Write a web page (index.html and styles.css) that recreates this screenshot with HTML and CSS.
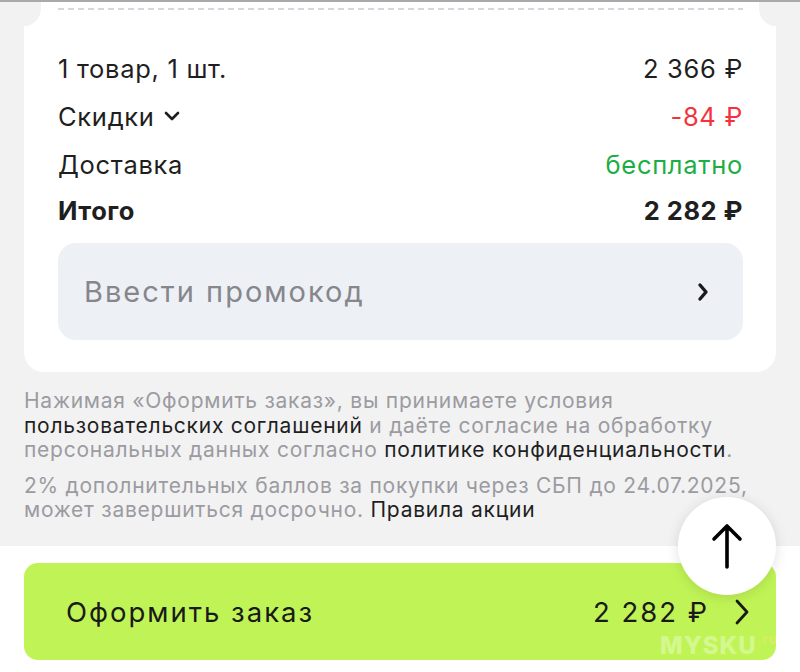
FILE: index.html
```html
<!DOCTYPE html>
<html lang="ru">
<head>
    <meta charset="UTF-8">
    <meta name="viewport" content="width=device-width, initial-scale=1.0">
    <title>Оформление заказа</title>
    <link rel="stylesheet" href="styles.css">
</head>
<body>
    <div class="page">
        <section class="card">
            <div class="notch notch-left"></div>
            <div class="notch notch-right"></div>
            <div class="dashes"></div>

            <div class="summary">
                <div class="row">
                    <span>1 товар, 1 шт.</span>
                    <span>2 366 ₽</span>
                </div>
                <div class="row">
                    <span class="discount">Скидки
                        <svg width="18" height="12" viewBox="0 0 18 12"><path d="M3 3 L9 9 L15 3" fill="none" stroke="#1f1f1f" stroke-width="2.6" stroke-linecap="round" stroke-linejoin="round"/></svg>
                    </span>
                    <span class="red">-84 ₽</span>
                </div>
                <div class="row">
                    <span>Доставка</span>
                    <span class="green">бесплатно</span>
                </div>
                <div class="row total">
                    <span>Итого</span>
                    <span>2 282 ₽</span>
                </div>
            </div>

            <div class="promo">
                <span>Ввести промокод</span>
                <svg width="16" height="22" viewBox="0 0 16 22"><path d="M5 4 L11 11 L5 18" fill="none" stroke="#1a1a1a" stroke-width="3.4" stroke-linecap="round" stroke-linejoin="round"/></svg>
            </div>
        </section>

        <div class="legal">
            <p>Нажимая «Оформить заказ», вы принимаете условия<br><a href="#">пользовательских соглашений</a> и даёте согласие на обработку<br>персональных данных согласно <a href="#">политике конфиденциальности</a>.</p>
            <p>2% дополнительных баллов за покупки через СБП до 24.07.2025,<br>может завершиться досрочно. <a href="#">Правила акции</a></p>
        </div>
    </div>

    <footer class="bottom-bar">
        <button class="checkout">
            <span>Оформить заказ</span>
            <span class="checkout-price">2 282 ₽
                <svg width="18" height="28" viewBox="0 0 18 28"><path d="M4 3 L14 14 L4 25" fill="none" stroke="#1a1a1a" stroke-width="2.8" stroke-linecap="round" stroke-linejoin="round"/></svg>
            </span>
        </button>
        <span class="watermark">MYSKU<small>.ru</small></span>
        <button class="to-top">
            <svg width="40" height="48" viewBox="0 0 40 48"><path d="M20 45 V4 M7 17 L20 4 L33 17" fill="none" stroke="#000" stroke-width="3.6" stroke-linecap="round" stroke-linejoin="round"/></svg>
        </button>
    </footer>
</body>
</html>
```

FILE: styles.css
```css
body {
    font-family: Inter, "Noto Sans", sans-serif;
    margin: 0;
    padding: 0;
    background-color: #f2f2f3;
    color: #1f1f1f;
    height: 672px;
    overflow: hidden;
    border-top: 2px solid #a9a9a9;
    box-sizing: border-box;
}
.page {
    padding: 0 24px;
}
.card {
    position: relative;
    background-color: white;
    border-radius: 0 0 20px 20px;
    padding: 6px 33px 32px 34px;
    overflow: hidden;
}
.notch {
    position: absolute;
    top: -22px;
    width: 34px;
    height: 46px;
    border-radius: 17px;
    background-color: #f2f2f3;
}
.notch-left {
    left: -17px;
}
.notch-right {
    right: -17px;
}
.dashes {
    height: 2px;
    background: repeating-linear-gradient(90deg, #d3d8de 0 6px, transparent 6px 10px);
}
.summary {
    margin-top: 34px;
    font-size: 25.5px;
    letter-spacing: 0.7px;
}
.row {
    display: flex;
    justify-content: space-between;
    align-items: center;
    height: 48px;
}
.row.total {
    height: 45px;
    font-weight: 700;
    letter-spacing: 0.5px;
}
.discount {
    display: flex;
    align-items: center;
    gap: 8px;
}
.red {
    color: #f5323c;
}
.green {
    color: #1bae45;
}
.promo {
    margin-top: 10px;
    height: 97px;
    background-color: #edf0f4;
    border-radius: 18px;
    display: flex;
    align-items: center;
    justify-content: space-between;
    padding: 0 32px 0 26px;
    font-size: 29px;
    letter-spacing: 2px;
    color: #86868c;
}
.legal {
    margin-top: 17px;
    font-size: 21px;
    letter-spacing: 0.75px;
    line-height: 24.5px;
    color: #9b9ba1;
}
.legal p {
    margin: 0 0 11px;
}
.legal a {
    color: #1f1f1f;
    text-decoration: none;
}
.bottom-bar {
    position: fixed;
    left: 0;
    bottom: 0;
    width: 100%;
    height: 126px;
    background-color: white;
    padding: 17px 24px 12px;
    box-sizing: border-box;
}
.checkout {
    width: 100%;
    height: 97px;
    border: none;
    border-radius: 14px;
    background-color: #c0f456;
    display: flex;
    align-items: center;
    justify-content: space-between;
    padding: 0 25px 0 42px;
    font-family: inherit;
    font-size: 27.5px;
    letter-spacing: 2px;
    color: #1a1a1a;
}
.checkout-price {
    display: flex;
    align-items: center;
    gap: 24px;
}
.watermark {
    position: absolute;
    right: 22px;
    bottom: 12px;
    font-size: 24px;
    font-weight: 800;
    letter-spacing: 1px;
    color: rgba(255, 255, 255, 0.35);
}
.watermark small {
    font-size: 13px;
    vertical-align: top;
    color: rgba(255, 230, 120, 0.35);
}
.to-top {
    position: absolute;
    top: -49px;
    right: 24px;
    width: 98px;
    height: 98px;
    border-radius: 50%;
    border: none;
    background-color: white;
    box-shadow: 0 2px 14px rgba(0, 0, 0, 0.12);
    display: flex;
    align-items: center;
    justify-content: center;
}
```
